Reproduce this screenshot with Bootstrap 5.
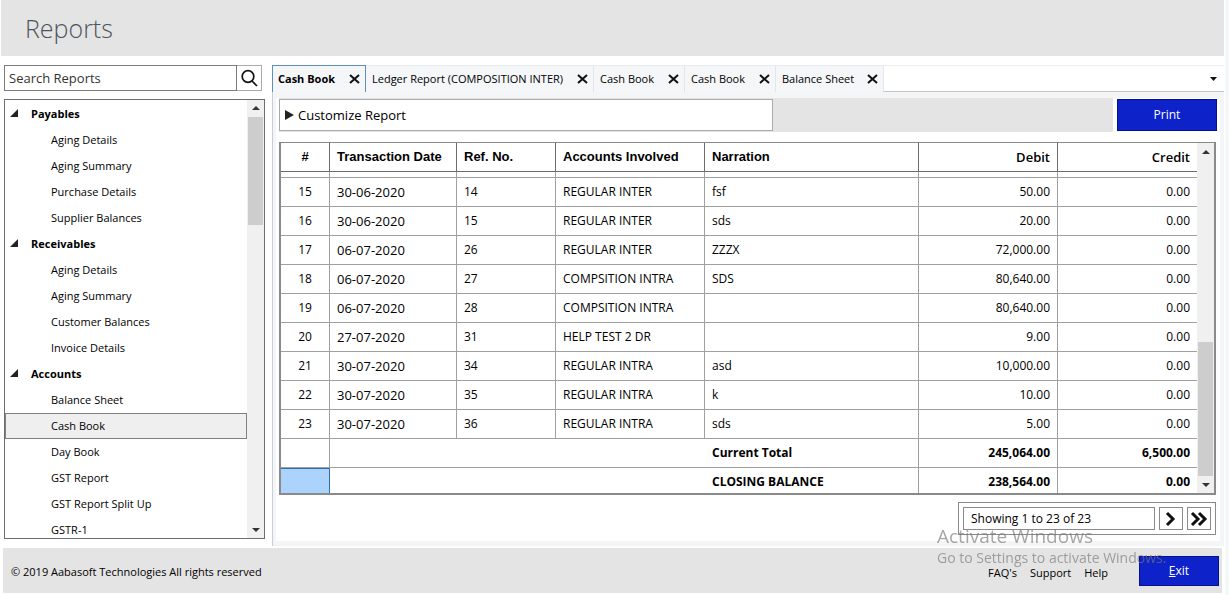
<!DOCTYPE html>
<html lang="en">
<head>
<meta charset="utf-8">
<meta name="viewport" content="width=device-width, initial-scale=1">
<title>Reports</title>
<link href="https://cdn.jsdelivr.net/npm/bootstrap@5.3.0/dist/css/bootstrap.min.css" rel="stylesheet">
<style>
body{font-family:"Open Sans","Noto Sans",sans-serif;font-size:12px;line-height:16px;color:#000;height:100vh;background:#fff;border-right:4px solid #f5f7f9}
.page-head{background:#e4e4e4;height:56px;margin:0 1px}
.page-head h1{font-size:25px;line-height:36px;font-weight:300;color:#4c555e;margin:0}
.page-main{min-height:0}
.side{width:268px;padding:9px 0 9px 4px}
.search-box{height:26px;width:258px}
.search-box input{border:1px solid #7c7c7c;border-radius:0;padding:0 4px;font-size:13px;color:#333;min-width:0}
.search-box input::placeholder{color:#333;opacity:1}
.search-box button{width:25px;border:1px solid #aaa;border-left:0;border-radius:0;background:#fff}
.tree{border:1px solid #6e6e6e;min-height:0;width:261px;font-size:11px}
.tree-list{min-height:0;padding-top:1px}
.tree-list a{display:block;height:26px;line-height:26px;padding-left:46px;color:#000;text-decoration:none;white-space:nowrap}
.tree-list a.picked{background:#efefef;box-shadow:inset 0 0 0 1px #808080}
.tree-list .branch{height:26px;line-height:26px;font-weight:700;font-size:11px;margin:0;padding-left:5px}
.tree-list .branch svg{margin-right:12px;flex:none}
.scroller{width:17px;background:#f0f0f0;flex:none}
.scroller .arrow{height:17px;display:flex;align-items:center;justify-content:center}
.scroller .thumb{background:#cdcdcd;margin:0 1px}
.tree .thumb{height:108px}
.grid-frame .thumb{height:134px}
.work{border-left:1px solid #c9ced4;background:#f4f5f6;min-width:0;margin:9px 1px 2px 4px}
.tab-strip{height:27px;background:#fff;font-size:11px}
.tab-item{background:#f4f6f8;border-right:1px solid #e2e6ea;border-top:1px solid #e8ebee;padding:0 5px 0 6px;white-space:nowrap}
.tab-item a{color:#000;text-decoration:none}
.tab-item button,.plain{border:0;background:none;padding:0;line-height:0}
.tab-item.current{border:1px solid #5b8fc0;border-bottom:0;font-weight:700;margin-left:-1px;padding-left:5px}
.tab-rest{border-bottom:1px solid #c4c4c4;border-top:1px solid #eee;padding-right:7px}
.sheet{background:#fff;min-height:0;margin:6px 4px 5px 3px;padding:0 3px}
.tool-strip{background:#e4e4e4;height:34px}
.customize{width:494px;height:32px;background:#fff;border:1px solid #ababab;font-size:13px;text-align:left;padding:0 5px;color:#000}
.go{background:#0d22c9;border:1px solid #07108a;border-radius:0;color:#fff;font-size:12px;line-height:16px;padding:0}
.go:hover{background:#0d22c9;color:#fff}
.print{width:100px;height:32px}
.exit{width:80px;height:30px;margin:0 3px 0 31px}
.grid-frame{border:2px solid #8a8a8a;border-top-width:1px;min-height:0;margin:10px 1px 0 0}
.ledger{table-layout:fixed;width:100%;border-collapse:separate;border-spacing:0}
.ledger th{height:29px;border:0 solid #6c6c6c;border-width:0 1px 1px 0;padding:0 7px;font:700 13px/16px "Liberation Sans",Arial,sans-serif;white-space:nowrap}
.ledger td{height:29px;border:0 solid #a0a0a0;border-width:0 1px 1px 0;padding:0 7px;line-height:16px;white-space:nowrap}
.ledger th:last-child,.ledger td:last-child{border-right:0}
.ledger .num{text-align:right}
.ledger th.num{font:600 13px/16px "Open Sans","Noto Sans",sans-serif}
.ledger .gap-row td{height:6px}
.ledger .ctr{text-align:center}
.ledger .date{font-size:13px}
.ledger td.open{border-right:0}
.ledger td.chosen{background:#abd3fe;border-color:#2e6fb0;box-shadow:inset 0 1px #2e6fb0}
.pager{border:1px solid #8a8a8a;padding:4px;background:#fff;margin:7px 1px 6px 0}
.pager output{width:192px;height:23px;border:1px solid #8a8a8a;padding-left:7px;line-height:21px}
.pager button{width:24px;height:23px;border:1px solid #8a8a8a;background:#fff;padding:0;line-height:0}
.foot{background:#e4e4e4;height:45px;margin:0 3px 2px;font-size:11px}
.foot-text{padding-top:2px}
.foot-links{gap:13px;padding-top:4px}
.foot a{color:#000;text-decoration:none}
.notice{position:fixed;right:55px;bottom:28px;width:237px;color:#777;opacity:.65;pointer-events:none;z-index:5;white-space:nowrap}
.notice .big{font-size:19px;line-height:26px;display:block}
.notice .sub{font-size:14px;line-height:18px;display:block}
</style>
</head>
<body class="d-flex flex-column overflow-hidden">
<header class="page-head d-flex align-items-center px-4 flex-shrink-0"><h1>Reports</h1></header>
<main class="page-main d-flex flex-grow-1">
  <aside class="side d-flex flex-column flex-shrink-0">
    <form class="search-box d-flex">
      <input class="flex-grow-1" type="text" aria-label="Search Reports" placeholder="Search Reports">
      <button type="button" class="p-0 d-flex align-items-center justify-content-center" aria-label="Search"><svg width="18" height="18" viewBox="0 0 18 18" fill="none" stroke="#111" stroke-width="1.700"><circle cx="8" cy="7.500" r="5.800"/><path d="M12 12l5 5"/></svg></button>
    </form>
    <div class="tree d-flex flex-grow-1 mt-2">
      <nav class="tree-list flex-grow-1 overflow-hidden" id="tree"></nav>
      <div class="scroller d-flex flex-column">
        <div class="arrow"><svg width="8" height="4"><path d="M0 4L4 0L8 4Z" fill="#333"/></svg></div>
        <div class="thumb"></div>
        <div class="arrow mt-auto"><svg width="8" height="4"><path d="M0 0L4 4L8 0Z" fill="#333"/></svg></div>
      </div>
    </div>
  </aside>
  <section class="work d-flex flex-column flex-grow-1">
    <div class="tab-strip d-flex flex-shrink-0" id="tabs"></div>
    <div class="sheet d-flex flex-column flex-grow-1">
      <div class="d-flex align-items-center flex-shrink-0">
        <div class="tool-strip d-flex align-items-center flex-grow-1 me-1">
          <button class="customize d-flex align-items-center" type="button"><svg class="me-1" width="9" height="10"><path d="M0 0L9 5L0 10Z" fill="#222"/></svg>Customize Report</button>
        </div>
        <button class="btn go print" type="button">Print</button>
      </div>
      <div class="grid-frame d-flex flex-grow-1">
        <div class="flex-grow-1 overflow-hidden">
          <table class="ledger">
            <colgroup><col style="width:49px"><col style="width:127px"><col style="width:99px"><col style="width:149px"><col><col style="width:139px"><col style="width:139px"></colgroup>
            <thead><tr><th class="ctr">#</th><th>Transaction Date</th><th>Ref. No.</th><th>Accounts Involved</th><th>Narration</th><th class="num">Debit</th><th class="num">Credit</th></tr></thead>
            <tbody id="rows"></tbody>
          </table>
        </div>
        <div class="scroller d-flex flex-column">
          <div class="arrow"><svg width="8" height="4"><path d="M0 4L4 0L8 4Z" fill="#333"/></svg></div>
          <div class="thumb mt-auto"></div>
          <div class="arrow"><svg width="8" height="4"><path d="M0 0L4 4L8 0Z" fill="#333"/></svg></div>
        </div>
      </div>
      <div class="pager d-flex align-self-end gap-1">
        <output>Showing 1 to 23 of 23</output>
        <button type="button" aria-label="Next page"><svg width="18" height="18" fill="none" stroke="#111" stroke-width="3"><path d="M5 3L11 9L5 15"/></svg></button>
        <button type="button" aria-label="Last page"><svg width="18" height="18" fill="none" stroke="#111" stroke-width="3"><path d="M2 3L8 9L2 15M9 3L15 9L9 15"/></svg></button>
      </div>
    </div>
  </section>
</main>
<footer class="foot d-flex align-items-center flex-shrink-0 ps-2">
  <span class="foot-text">© 2019 Aabasoft Technologies All rights reserved</span>
  <div class="foot-links ms-auto d-flex"><a href="#">FAQ's</a><a href="#">Support</a><a href="#">Help</a></div>
  <button class="btn go exit" type="button"><u>E</u>xit</button>
</footer>
<div class="notice"><span class="big">Activate Windows</span><span class="sub">Go to Settings to activate Windows.</span></div>
<script src="https://cdn.jsdelivr.net/npm/bootstrap@5.3.0/dist/js/bootstrap.bundle.min.js"></script>
<script>
const tree={Payables:["Aging Details","Aging Summary","Purchase Details","Supplier Balances"],Receivables:["Aging Details","Aging Summary","Customer Balances","Invoice Details"],Accounts:["Balance Sheet","Cash Book","Day Book","GST Report","GST Report Split Up","GSTR-1"]};
document.getElementById("tree").innerHTML=Object.entries(tree).map(([k,v])=>`<h2 class="branch d-flex align-items-center"><svg width="9" height="9"><path d="M8 0V8H0Z" fill="#222"/></svg>${k}</h2>`+v.map(t=>`<a href="#"${t=="Cash Book"?' class="picked"':''}>${t}</a>`).join("")).join("");
const tabs=[["Cash Book",94],["Ledger Report (COMPOSITION INTER)",228],["Cash Book",91],["Cash Book",91],["Balance Sheet",108]];
document.getElementById("tabs").innerHTML=tabs.map(([t,w],i)=>`<div class="tab-item d-flex align-items-center justify-content-between${i?'':' current'}" style="width:${w}px"><a href="#">${t}</a><button type="button" aria-label="Close"><svg width="11" height="10" stroke="#111" stroke-width="2"><path d="M1 1L10 9M10 1L1 9"/></svg></button></div>`).join("")+`<div class="tab-rest flex-grow-1 d-flex justify-content-end align-items-center"><button class="plain" type="button" aria-label="All tabs"><svg width="7" height="4"><path d="M0 0H7L3.500 4Z" fill="#111"/></svg></button></div>`;
const rows=[[15,"30-06-2020",14,"REGULAR INTER","fsf","50.00"],[16,"30-06-2020",15,"REGULAR INTER","sds","20.00"],[17,"06-07-2020",26,"REGULAR INTER","ZZZX","72,000.00"],[18,"06-07-2020",27,"COMPSITION INTRA","SDS","80,640.00"],[19,"06-07-2020",28,"COMPSITION INTRA","","80,640.00"],[20,"27-07-2020",31,"HELP TEST 2 DR","","9.00"],[21,"30-07-2020",34,"REGULAR INTRA","asd","10,000.00"],[22,"30-07-2020",35,"REGULAR INTRA","k","10.00"],[23,"30-07-2020",36,"REGULAR INTRA","sds","5.00"]];
document.getElementById("rows").innerHTML='<tr class="gap-row">'+"<td></td>".repeat(7)+"</tr>"+rows.map(r=>`<tr><td class="ctr">${r[0]}</td><td class="date">${r[1]}</td><td>${r[2]}</td><td>${r[3]}</td><td>${r[4]}</td><td class="num">${r[5]}</td><td class="num">0.00</td></tr>`).join("")+[["Current Total","245,064.00","6,500.00"],["CLOSING BALANCE","238,564.00","0.00"]].map((r,i)=>`<tr class="fw-bold"><td${i?' class="chosen"':''}></td><td class="open" colspan="3"></td><td>${r[0]}</td><td class="num">${r[1]}</td><td class="num">${r[2]}</td></tr>`).join("");
</script>
</body>
</html>
